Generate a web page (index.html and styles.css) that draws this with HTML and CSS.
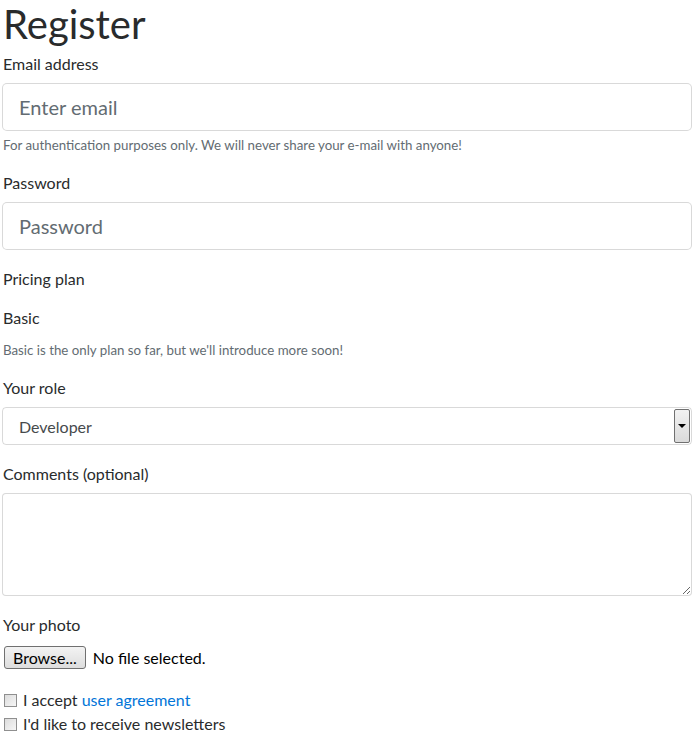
FILE: index.html
```html
<!DOCTYPE html>
<html lang="en">
<head>
    <meta charset="UTF-8">
    <meta name="viewport" content="width=device-width, initial-scale=1.0">
    <title>Register</title>
    <link rel="stylesheet" href="styles.css">
</head>
<body>
    <div class="container">
        <h1>Register</h1>
        <form id="registerForm" action="#" method="post">
            <div class="form-group">
                <label for="email">Email address</label>
                <input type="email" id="email" class="form-control form-control-lg" placeholder="Enter email">
                <small class="form-text">For authentication purposes only. We will never share your e-mail with anyone!</small>
            </div>
            <div class="form-group">
                <label for="password">Password</label>
                <input type="password" id="password" class="form-control form-control-lg" placeholder="Password">
            </div>
            <div class="form-group">
                <label>Pricing plan</label>
                <p class="form-control-static">Basic</p>
                <small class="form-text">Basic is the only plan so far, but we'll introduce more soon!</small>
            </div>
            <div class="form-group">
                <label for="role">Your role</label>
                <div class="select-box">
                    <select id="role">
                        <option>Developer</option>
                        <option>Designer</option>
                        <option>Manager</option>
                    </select>
                    <span class="select-arrow"></span>
                </div>
            </div>
            <div class="form-group">
                <label for="comments">Comments (optional)</label>
                <textarea id="comments" class="form-control"></textarea>
            </div>
            <div class="form-group">
                <label>Your photo</label>
                <div class="file-input">
                    <button type="button" class="browse">Browse...</button>
                    <span>No file selected.</span>
                </div>
            </div>
            <div class="check">
                <input type="checkbox" id="agree">
                <label for="agree">I accept <a href="#">user agreement</a></label>
            </div>
            <div class="check">
                <input type="checkbox" id="news">
                <label for="news" class="plain">I'd like to receive newsletters</label>
            </div>
        </form>
    </div>
</body>
</html>
```

FILE: styles.css
```css
body {
    margin: 0;
    font-family: Lato, "Liberation Sans", sans-serif;
    font-size: 16px;
    line-height: 1.5;
    color: #292b2c;
    background-color: #fff;
}
.container {
    padding: 0 7px 0 2px;
}
h1 {
    margin: 0 0 3px 1px;
    font-size: 40px;
    font-weight: 400;
    line-height: 48px;
}
.form-group {
    margin-bottom: 16px;
}
.form-group > label {
    display: block;
    margin: 0 0 7px 1px;
    padding-top: 1px;
}
.form-control {
    display: block;
    width: 100%;
    box-sizing: border-box;
    font-family: inherit;
    color: #464a4c;
    background-color: #fff;
    border: 1px solid rgba(0, 0, 0, .15);
    border-radius: 4px;
}
.form-control-lg {
    height: 48px;
    padding: 8px 16px;
    font-size: 20px;
    border-radius: 5px;
}
.form-control::placeholder {
    color: #636c72;
}
textarea.form-control {
    height: 103px;
    resize: both;
}
.form-text {
    display: block;
    margin: 5px 0 0 1px;
    font-size: 13.3px;
    line-height: 18px;
    color: #636c72;
}
.form-control-static {
    margin: 0;
    padding: 8px 0 6px 1px;
}
.select-box {
    display: flex;
    height: 38px;
    box-sizing: border-box;
    border: 1px solid rgba(0, 0, 0, .15);
    border-radius: 4px;
    padding: 1px 1px 1px 0;
}
.select-box select {
    flex: 1;
    appearance: none;
    border: none;
    background: transparent;
    font-family: inherit;
    font-size: 16px;
    color: #464a4c;
    padding: 0 16px;
    outline: none;
}
.select-arrow {
    width: 14px;
    border: 1px solid #707070;
    border-radius: 2px;
    background: linear-gradient(#f2f2f2, #dadada);
    display: flex;
    align-items: center;
    justify-content: center;
}
.select-arrow::after {
    content: "";
    border-left: 4px solid transparent;
    border-right: 4px solid transparent;
    border-top: 4px solid #000;
}
.file-input {
    display: flex;
    align-items: flex-start;
    gap: 7px;
    height: 28px;
    box-sizing: border-box;
    padding: 2px 0 0 2px;
}
.browse {
    height: 23px;
    padding: 0 8px;
    font-family: inherit;
    font-size: 16px;
    color: #000;
    border: 1px solid #707070;
    border-radius: 3px;
    background: linear-gradient(#f3f3f3, #dddddd);
}
.file-input span {
    color: #000;
    line-height: 23px;
}
.check {
    display: flex;
    align-items: center;
    height: 24px;
}
.check input {
    appearance: none;
    width: 13px;
    height: 13px;
    margin: 0 6px 0 2px;
    border: 1px solid #8f8f8f;
    background: linear-gradient(135deg, #dcdcdc, #f6f6f6);
}
.check a {
    color: #0275d8;
    text-decoration: none;
}
```
